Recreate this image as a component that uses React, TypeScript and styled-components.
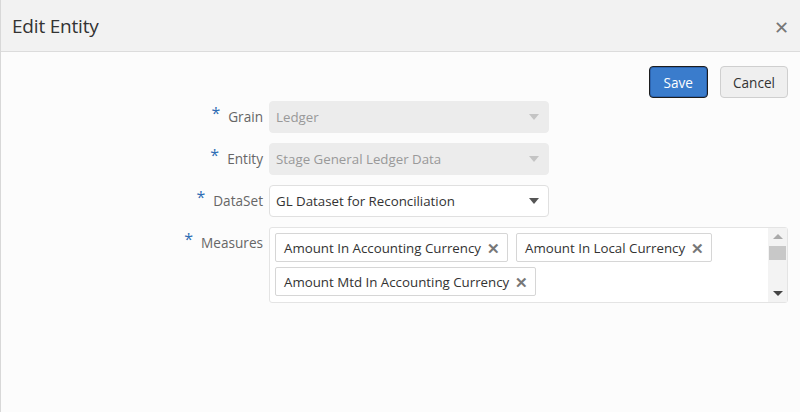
import { createGlobalStyle } from "styled-components";
import styled from "styled-components";

const GlobalStyle = createGlobalStyle`
  html, body {
    margin: 0;
    padding: 0;
    background: #fcfcfc;
  }
  body {
    font-family: "Open Sans", "Noto Sans", sans-serif;
    color: #333;
  }
`;

const Dialog = styled.div`
  width: 800px;
  height: 412px;
  display: flex;
  flex-direction: column;
  background: #fcfcfc;
  border-left: 1px solid #d8d8d8;
  box-sizing: border-box;
`;

const Header = styled.div`
  height: 51px;
  display: flex;
  align-items: center;
  justify-content: space-between;
  padding: 0 11px 0 11px;
  background: #f2f2f2;
  border-bottom: 1px solid #dcdcdc;
`;

const Title = styled.h1`
  margin: 0;
  font-size: 19px;
  font-weight: 400;
  color: #333;
  letter-spacing: -0.2px;
`;

const Close = styled.span`
  font-size: 18px;
  color: #777;
  line-height: 1;
  padding-top: 2px;
`;

const Body = styled.div`
  padding: 14px 12px 0 0;
  display: flex;
  flex-direction: column;
`;

const Actions = styled.div`
  display: flex;
  justify-content: flex-end;
  gap: 12px;
`;

const Button = styled.button<{ primary?: boolean }>`
  height: 32px;
  padding: 0 ${(p) => (p.primary ? "14px" : "12px")};
  font-family: inherit;
  font-size: 13.6px;
  border-radius: 4px;
  cursor: pointer;
  color: ${(p) => (p.primary ? "#fff" : "#333")};
  background: ${(p) => (p.primary ? "#3a7ccc" : "#efefef")};
  border: 1px solid ${(p) => (p.primary ? "#1d1d1d" : "#cfcfcf")};
  box-shadow: ${(p) => (p.primary ? "inset 0 0 0 1px #2c64b0" : "none")};
`;

const Form = styled.div`
  display: grid;
  grid-template-columns: 262px 1fr;
  column-gap: 6px;
  row-gap: 10px;
  margin-top: 3px;
`;

const Label = styled.div`
  display: flex;
  justify-content: flex-end;
  align-items: flex-start;
  padding-top: 6px;
  font-size: 13.6px;
  color: #666;
`;

const Star = styled.span`
  color: #2e6db4;
  font-size: 16px;
  margin-right: 8px;
  line-height: 1;
  margin-top: -2px;
`;

const Select = styled.div<{ disabled?: boolean }>`
  width: 280px;
  height: 32px;
  box-sizing: border-box;
  display: flex;
  align-items: center;
  justify-content: space-between;
  padding: 0 9px 0 6px;
  border-radius: 4px;
  font-size: 13.3px;
  color: ${(p) => (p.disabled ? "#999" : "#333")};
  background: ${(p) => (p.disabled ? "#ececec" : "#fff")};
  border: 1px solid ${(p) => (p.disabled ? "#ececec" : "#e0e0e0")};
`;

const Arrow = styled.span<{ disabled?: boolean }>`
  width: 0;
  height: 0;
  border-left: 5px solid transparent;
  border-right: 5px solid transparent;
  border-top: 6px solid ${(p) => (p.disabled ? "#c4c4c4" : "#555")};
`;

const TagBox = styled.div`
  height: 76px;
  box-sizing: border-box;
  display: flex;
  background: #fff;
  border: 1px solid #e4e4e4;
  border-radius: 3px;
`;

const Tags = styled.div`
  flex: 1;
  display: flex;
  flex-wrap: wrap;
  align-content: flex-start;
  gap: 5px 8px;
  padding: 5px 5px;
`;

const Tag = styled.div`
  height: 29px;
  box-sizing: border-box;
  display: flex;
  align-items: center;
  gap: 6px;
  padding: 0 7px 0 8px;
  border: 1px solid #d6d6d6;
  border-radius: 2px;
  background: #fff;
  font-size: 13.3px;
  color: #333;
`;

const Remove = styled.span`
  font-size: 15px;
  color: #777;
  font-weight: 700;
`;

const Scrollbar = styled.div`
  width: 19px;
  background: #f3f3f3;
  display: flex;
  flex-direction: column;
  align-items: center;
  padding: 6px 0 6px;
  box-sizing: border-box;
`;

const ScrollUp = styled.span`
  width: 0;
  height: 0;
  border-left: 5px solid transparent;
  border-right: 5px solid transparent;
  border-bottom: 5px solid #aaa;
`;

const ScrollDown = styled.span`
  width: 0;
  height: 0;
  border-left: 5px solid transparent;
  border-right: 5px solid transparent;
  border-top: 5px solid #444;
  margin-top: auto;
`;

const Thumb = styled.div`
  width: 17px;
  height: 14px;
  margin-top: 7px;
  background: #c8c8c8;
`;

const selects = [
  { label: "Grain", value: "Ledger", disabled: true },
  { label: "Entity", value: "Stage General Ledger Data", disabled: true },
  { label: "DataSet", value: "GL Dataset for Reconciliation", disabled: false },
];

const measures = [
  "Amount In Accounting Currency",
  "Amount In Local Currency",
  "Amount Mtd In Accounting Currency",
];

export default function App() {
  return (
    <>
      <GlobalStyle />
      <Dialog>
        <Header>
          <Title>Edit Entity</Title>
          <Close>✕</Close>
        </Header>
        <Body>
          <Actions>
            <Button primary>Save</Button>
            <Button>Cancel</Button>
          </Actions>
          <Form>
            {selects.map((s) => (
              <>
                <Label key={s.label + "-l"}>
                  <Star>*</Star>
                  {s.label}
                </Label>
                <div key={s.label + "-v"}>
                  <Select disabled={s.disabled}>
                    {s.value}
                    <Arrow disabled={s.disabled} />
                  </Select>
                </div>
              </>
            ))}
            <Label>
              <Star>*</Star>
              Measures
            </Label>
            <TagBox>
              <Tags>
                {measures.map((m) => (
                  <Tag key={m}>
                    {m}
                    <Remove>✕</Remove>
                  </Tag>
                ))}
              </Tags>
              <Scrollbar>
                <ScrollUp />
                <Thumb />
                <ScrollDown />
              </Scrollbar>
            </TagBox>
          </Form>
        </Body>
      </Dialog>
    </>
  );
}
